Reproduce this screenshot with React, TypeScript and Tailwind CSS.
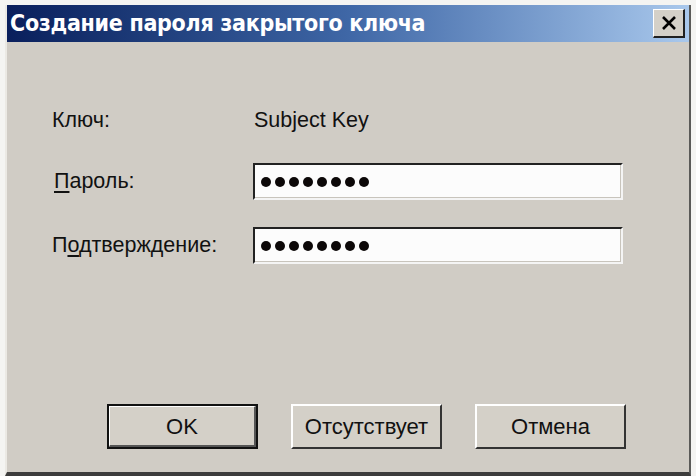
const Dots = () => (
  <div className="flex gap-[4px]">
    {Array.from({ length: 8 }).map((_, i) => (
      <div key={i} className="w-[10px] h-[10px] rounded-full bg-[#0c0808]" />
    ))}
  </div>
);

const inputCls =
  "w-[370px] h-[37px] flex items-center pl-[6px] bg-[#fcfcfc] border-t-2 border-l-2 border-t-[#222] border-l-[#222] border-b-2 border-r-2 border-b-[#f4f4f4] border-r-[#f4f4f4] shadow-[inset_-1px_-1px_0_#c8c4bc]";

const btnCls =
  "w-[151px] h-[45px] flex items-center justify-center bg-[#d4d0c8] border-t-2 border-l-2 border-t-white border-l-white border-b-2 border-r-2 border-b-[#333] border-r-[#333]";

export default function App() {
  return (
    <div className="w-[696px] h-[476px] bg-[#f4f4f2] pt-[5px] pl-[5px] overflow-hidden font-['Liberation_Sans',Arial,sans-serif]">
      <div className="w-[686px] h-[471px] flex flex-col bg-[#d0ccc5] border-l-2 border-l-[#ebe9e4] border-r-2 border-r-[#5a5a58] border-b-4 border-b-[#3c3c3c]">
        {/* title bar */}
        <div className="h-[37px] flex items-center justify-between pl-[3px] pr-[4px] bg-gradient-to-r from-[#0a1f5c] via-[#3f67a6] to-[#a9c8ec]">
          <span className="text-white font-bold text-[23px] tracking-[-0.3px] font-['DejaVu_Sans_Condensed','DejaVu_Sans',sans-serif]">
            Создание пароля закрытого ключа
          </span>
          <div className="w-[32px] h-[29px] flex items-center justify-center bg-[#d4d0c8] border-t border-l border-t-white border-l-white border-b-2 border-r-2 border-b-[#202020] border-r-[#202020]">
            <svg width="16" height="16" viewBox="0 0 16 16">
              <path d="M2 2 L14 14 M14 2 L2 14" stroke="#000" strokeWidth="2.6" />
            </svg>
          </div>
        </div>

        {/* body */}
        <div className="flex-1 flex flex-col pl-[45px] pt-[60px] text-[21.5px] text-[#111]">
          <div className="flex items-center h-[37px]">
            <span className="w-[202px]">Ключ:</span>
            <span>Subject Key</span>
          </div>
          <div className="flex items-center h-[37px] mt-[24px]">
            <span className="w-[201px] pl-[2px]">
              <span className="underline underline-offset-[3px]">П</span>ароль:
            </span>
            <div className={inputCls}>
              <Dots />
            </div>
          </div>
          <div className="flex items-center h-[37px] mt-[27px]">
            <span className="w-[201px]">
              П<span className="underline underline-offset-[3px]">о</span>дтверждение:
            </span>
            <div className={inputCls}>
              <Dots />
            </div>
          </div>

          {/* buttons */}
          <div className="flex mt-[140px] ml-[55px] gap-[33px] text-[22px]">
            <div className="w-[151px] h-[45px] border-2 border-[#111] flex">
              <div className="flex-1 flex items-center justify-center bg-[#d4d0c8] border-t border-l border-t-white border-l-white border-b-2 border-r-2 border-b-[#555] border-r-[#555]">
                OK
              </div>
            </div>
            <div className={btnCls}>Отсутствует</div>
            <div className={btnCls}>Отмена</div>
          </div>
        </div>
      </div>
    </div>
  );
}
